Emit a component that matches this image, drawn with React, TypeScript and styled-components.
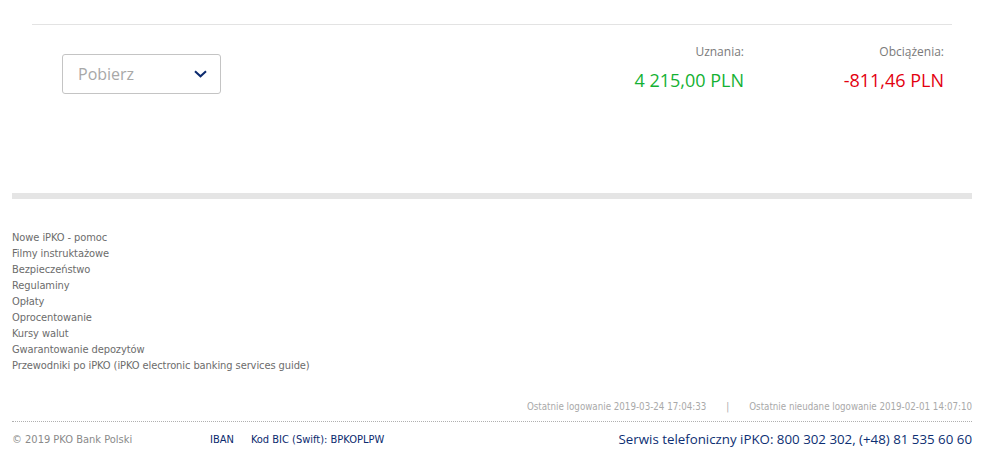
import React from 'react';
import styled, { createGlobalStyle } from 'styled-components';

const GlobalStyle = createGlobalStyle`
  body {
    margin: 0;
    background: #ffffff;
    font-family: "DejaVu Sans Condensed", "DejaVu Sans", sans-serif;
  }
`;

const Page = styled.div`
  width: 960px;
  padding: 0 10px 0 12px;
`;

const Summary = styled.section`
  margin: 0 20px;
  padding-top: 24px;
  height: 169px;
`;

const TopRule = styled.div`
  height: 1px;
  background: #e3e3e3;
`;

const SummaryRow = styled.div`
  display: flex;
  align-items: flex-start;
  padding: 15px 8px 0 30px;
`;

const Select = styled.button`
  margin-top: 14px;
  width: 159px;
  height: 40px;
  box-sizing: border-box;
  border: 1px solid #c4c4c4;
  border-radius: 3px;
  background: #fff;
  display: flex;
  align-items: center;
  justify-content: space-between;
  padding: 0 13px 0 15px;
  font-family: "Open Sans", sans-serif;
  font-size: 16px;
  color: #a8a8a8;
  cursor: pointer;
`;

const Totals = styled.div`
  margin-left: auto;
  display: flex;
`;

const Total = styled.div`
  width: 200px;
  text-align: right;
  font-family: "Open Sans", sans-serif;
`;

const TotalLabel = styled.div`
  font-size: 12px;
  line-height: 24px;
  color: #7a7a7a;
`;

const TotalValue = styled.div<{ $tone: 'credit' | 'debit' }>`
  margin-top: 4px;
  font-size: 18px;
  line-height: 24px;
  color: ${(p) => (p.$tone === 'credit' ? '#14b133' : '#e3000f')};
`;

const ThickRule = styled.div`
  height: 6px;
  background: #e5e5e5;
`;

const Links = styled.ul`
  list-style: none;
  margin: 0;
  padding: 31px 0 0;
`;

const LinkItem = styled.li`
  font-size: 11px;
  line-height: 16px;
  letter-spacing: -0.08px;
  color: #6c6c6c;
`;

const LoginInfo = styled.div`
  margin-top: 25px;
  display: flex;
  justify-content: flex-end;
  gap: 20px;
  font-size: 9.7px;
  line-height: 16px;
  color: #a9a9a9;
  padding-bottom: 6px;
  border-bottom: 1px dotted #b0b0b0;
`;

const Bottom = styled.div`
  display: flex;
  align-items: center;
  height: 34px;
`;

const Copy = styled.span`
  font-size: 11px;
  color: #8a8a8a;
  width: 198px;
`;

const FooterLink = styled.a`
  font-size: 11px;
  color: #0b2a6e;
  text-decoration: none;
  margin-right: 17px;
`;

const Phone = styled.span`
  margin-left: auto;
  font-family: "Open Sans", sans-serif;
  font-size: 13.3px;
  color: #0d2f73;
`;

const Chevron = () => (
  <svg width="13" height="8" viewBox="0 0 13 8">
    <path d="M1 1.2 L6.5 6.3 L12 1.2" fill="none" stroke="#0b2a6e" strokeWidth="2" />
  </svg>
);

const links = [
  'Nowe iPKO - pomoc',
  'Filmy instruktażowe',
  'Bezpieczeństwo',
  'Regulaminy',
  'Opłaty',
  'Oprocentowanie',
  'Kursy walut',
  'Gwarantowanie depozytów',
  'Przewodniki po iPKO (iPKO electronic banking services guide)',
];

export default function App() {
  return (
    <Page>
      <GlobalStyle />
      <Summary>
        <TopRule />
        <SummaryRow>
          <Select>
            Pobierz
            <Chevron />
          </Select>
          <Totals>
            <Total>
              <TotalLabel>Uznania:</TotalLabel>
              <TotalValue $tone="credit">4 215,00 PLN</TotalValue>
            </Total>
            <Total>
              <TotalLabel>Obciążenia:</TotalLabel>
              <TotalValue $tone="debit">-811,46 PLN</TotalValue>
            </Total>
          </Totals>
        </SummaryRow>
      </Summary>
      <ThickRule />
      <Links>
        {links.map((l) => (
          <LinkItem key={l}>{l}</LinkItem>
        ))}
      </Links>
      <LoginInfo>
        <span>Ostatnie logowanie 2019-03-24 17:04:33</span>
        <span>|</span>
        <span>Ostatnie nieudane logowanie 2019-02-01 14:07:10</span>
      </LoginInfo>
      <Bottom>
        <Copy>© 2019 PKO Bank Polski</Copy>
        <FooterLink href="#">IBAN</FooterLink>
        <FooterLink href="#">Kod BIC (Swift): BPKOPLPW</FooterLink>
        <Phone>Serwis telefoniczny iPKO: 800 302 302, (+48) 81 535 60 60</Phone>
      </Bottom>
    </Page>
  );
}
